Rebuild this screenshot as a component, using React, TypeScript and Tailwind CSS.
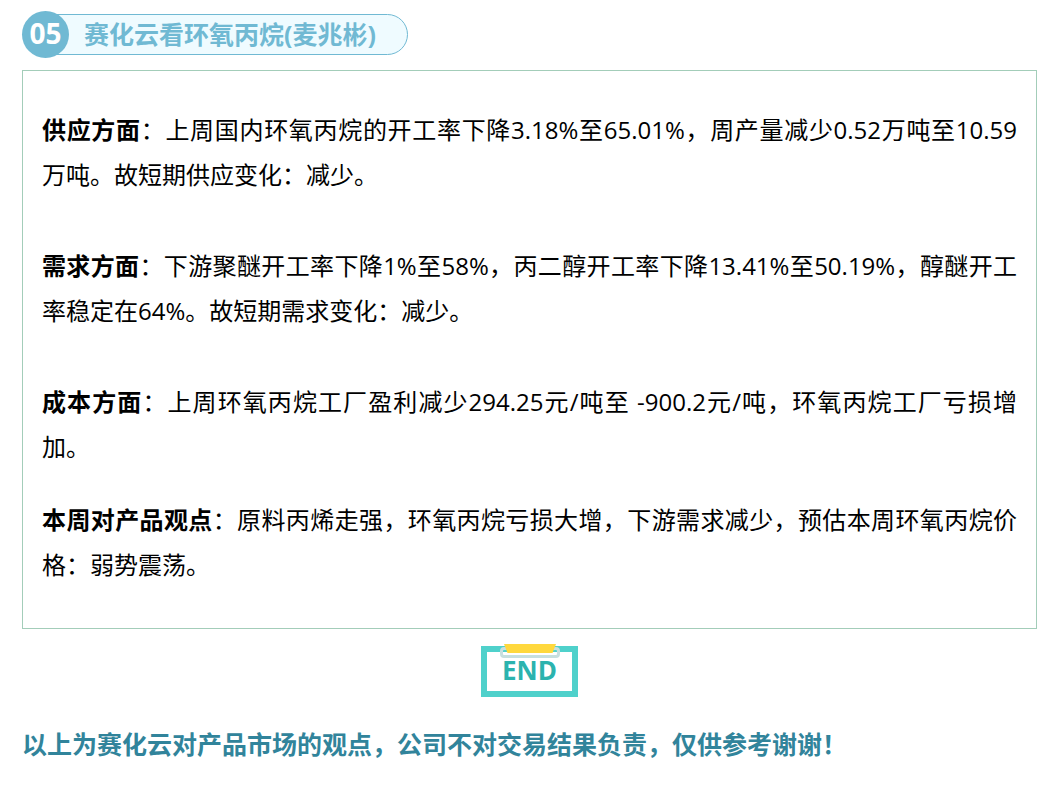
const opinions = [
  {
    title: "供应方面",
    text: "上周国内环氧丙烷的开工率下降3.18%至65.01%，周产量减少0.52万吨至10.59万吨。故短期供应变化：减少。",
  },
  {
    title: "需求方面",
    text: "下游聚醚开工率下降1%至58%，丙二醇开工率下降13.41%至50.19%，醇醚开工率稳定在64%。故短期需求变化：减少。",
  },
  {
    title: "成本方面",
    text: "上周环氧丙烷工厂盈利减少294.25元/吨至 -900.2元/吨，环氧丙烷工厂亏损增加。",
  },
];

function SectionTitle({ index, title }: { index: string; title: string }) {
  return (
    <div className="flex items-center">
      <span className="z-10 flex size-[47px] shrink-0 items-center justify-center rounded-full bg-[#70b9d3] pb-1 text-[28px] leading-8 font-bold text-white">
        {index}
      </span>
      <h2 className="-ml-6 flex h-[41px] items-center rounded-r-full border border-[#70b9d3] bg-[#effbff] pr-[31px] pb-0.5 pl-[38px] text-[25px] leading-8 font-bold text-[#70b9d3]">
        {title}
      </h2>
    </div>
  );
}

function Opinion({ title, text }: { title: string; text: string }) {
  return (
    <p className="text-justify text-2xl leading-[45px] text-black">
      <strong className="font-bold">{title}</strong>：{text}
    </p>
  );
}

function EndBadge() {
  return (
    <div className="relative flex h-[51px] w-[97px] items-center justify-center border-6 border-[#4fd1cb] pb-1 text-[26px] leading-8 font-bold text-[#2bb3ae]">
      END
      <svg
        className="absolute -top-2 left-[13px]"
        width="60"
        height="14"
        viewBox="0 0 60 14"
        aria-hidden="true"
      >
        <rect x="1.5" y="4.5" width="57" height="8" rx="2.5" fill="none" stroke="#c7dfdf" strokeWidth="3" />
        <path d="M4 0H56L52.500 9H7.500Z" fill="#ffd83d" />
      </svg>
    </div>
  );
}

export default function App() {
  return (
    <main className="bg-white pt-[11px] pr-[23px] pb-8 pl-[22px] font-['Open_Sans','Noto_Sans_CJK_SC',sans-serif]">
      <SectionTitle index="05" title="赛化云看环氧丙烷(麦兆彬)" />

      <section className="mt-3 border border-[#a3cdb9] px-[19px] pt-9 pb-[41px]">
        <div className="flex flex-col gap-[46px]">
          {opinions.map((item) => (
            <Opinion key={item.title} title={item.title} text={item.text} />
          ))}
        </div>
        <div className="mt-7">
          <Opinion
            title="本周对产品观点"
            text="原料丙烯走强，环氧丙烷亏损大增，下游需求减少，预估本周环氧丙烷价格：弱势震荡。"
          />
        </div>
      </section>

      <div className="mt-[17px] flex justify-center">
        <EndBadge />
      </div>

      <p className="mt-[27px] text-[25px] leading-10 font-bold text-[#31849b]">
        以上为赛化云对产品市场的观点，公司不对交易结果负责，仅供参考谢谢！
      </p>
    </main>
  );
}
